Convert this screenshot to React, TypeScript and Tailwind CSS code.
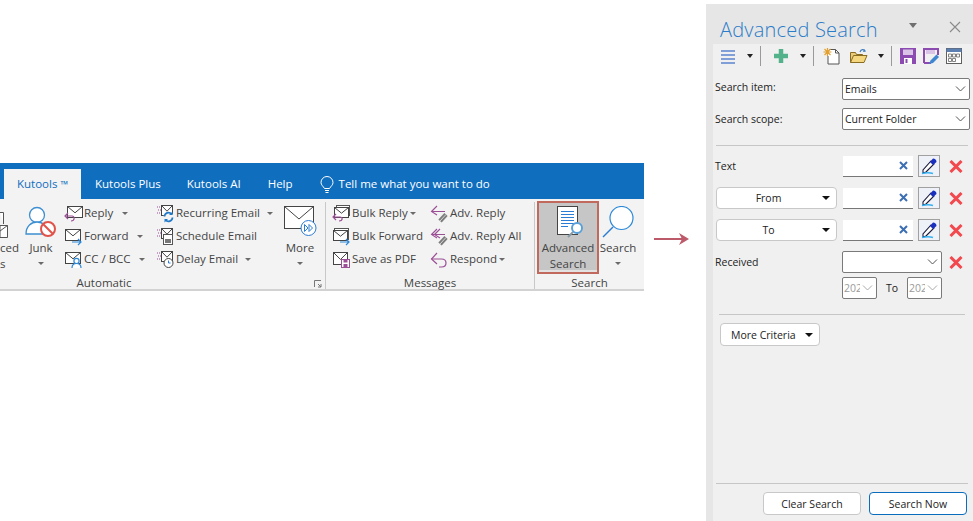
import React from "react";

const FONT = "font-['Open_Sans','Noto_Sans',sans-serif]";

function Env({ x = 1, y = 3, w = 15, h = 11, stroke = "#444" }: { x?: number; y?: number; w?: number; h?: number; stroke?: string }) {
  return (
    <>
      <rect x={x + 0.5} y={y + 0.5} width={w} height={h} fill="#fff" stroke={stroke} />
      <path d={`M${x + 0.5} ${y + 0.5}L${x + w / 2 + 0.5} ${y + h * 0.62}L${x + w + 0.5} ${y + 0.5}`} fill="none" stroke={stroke} />
    </>
  );
}

function Sm({ children }: { children: React.ReactNode }) {
  return <svg width="19" height="18" viewBox="0 0 19 18" className="shrink-0 overflow-visible">{children}</svg>;
}

const Purple = "#9b4f96";
const Blue = "#2b88d8";

function ReplyIcon() {
  return <Sm><Env x={3} y={1} /><path d="M1 11h7c3 0 3 5-1 5" fill="none" stroke={Purple} strokeWidth="1.2" /><path d="M4 8l-3 3 3 3" fill="none" stroke={Purple} strokeWidth="1.2" /></Sm>;
}
function ForwardIcon() {
  return <Sm><Env x={1} y={1} /><path d="M8 14h9M14 11l3 3-3 3" fill="none" stroke={Blue} strokeWidth="1.2" /></Sm>;
}
function CcIcon() {
  return <Sm><Env x={1} y={1} /><circle cx="12.5" cy="10" r="2.6" fill="#fff" stroke={Blue} strokeWidth="1.2" /><path d="M8 17c0-6 9-6 9 0" fill="#fff" stroke={Blue} strokeWidth="1.2" /></Sm>;
}
function Dots() {
  return <path d="M0 2h3M1 5h3M0 8h3" stroke={Purple} strokeWidth="1" strokeDasharray="1 1" fill="none" />;
}
function RecurIcon() {
  return <Sm><g transform="translate(1 0)"><Dots /><Env x={4} y={0} w={11} h={10} /><circle cx="11.500" cy="12" r="5" fill="#f3f3f3" stroke="none" /><path d="M7.500 11.500a4 4 0 0 1 7-2.500M15.500 12.500a4 4 0 0 1-7 2.500" fill="none" stroke="#1f78c8" strokeWidth="1.700" /><path d="M15.500 6.500v3.500h-3.500M7.500 17.500V14h3.500" fill="#1f78c8" /></g></Sm>;
}
function ScheduleIcon() {
  return <Sm><g transform="translate(1 0)"><Dots /><Env x={4} y={0} w={11} h={10} /><rect x="6.500" y="6.500" width="9" height="10" fill="#fff" stroke="#555" /><rect x="8" y="11" width="6" height="4" fill="#777" /></g></Sm>;
}
function DelayIcon() {
  return <Sm><g transform="translate(1 0)"><Dots /><Env x={4} y={0} w={11} h={10} /><circle cx="11.500" cy="12" r="4.500" fill="#fff" stroke="#444" /><path d="M11.500 9.500V12h2" fill="none" stroke="#2b7cd3" /></g></Sm>;
}
function BulkReplyIcon() {
  return <Sm><rect x="4.500" y="0.500" width="13" height="10" fill="#fff" stroke="#555" /><Env x={2} y={2} w={14} h={10} /><path d="M1 12h7c3 0 3 4-1 4" fill="none" stroke={Purple} strokeWidth="1.2" /><path d="M4 9l-3 3 3 3" fill="none" stroke={Purple} strokeWidth="1.2" /></Sm>;
}
function BulkForwardIcon() {
  return <Sm><rect x="2.500" y="0.500" width="14" height="11" fill="#fff" stroke="#555" /><Env x={1} y={2} w={14} h={10} /><path d="M8 14h9M14 11l3 3-3 3" fill="none" stroke={Blue} strokeWidth="1.2" /></Sm>;
}
function PdfIcon() {
  return <Sm><Env x={1} y={1} w={14} h={12} /><rect x="9.500" y="8.500" width="8" height="8" fill="#fff" stroke={Purple} /><rect x="11.500" y="8.500" width="4" height="3" fill={Purple} /><rect x="11.500" y="13" width="4" height="3" fill={Purple} /></Sm>;
}
function AdvReplyIcon({ all }: { all?: boolean }) {
  return (
    <Sm>
      <path d="M7 1L1.500 6.500L7 10M1.500 6.500H15" fill="none" stroke={Purple} strokeWidth="1.100" />
      {all && <path d="M10 1L4.500 6.500L10 10" fill="none" stroke={Purple} strokeWidth="1.100" />}
      <path d="M10 16L16 9.500" fill="none" stroke="#7d7d7d" strokeWidth="4.500" />
      <path d="M10 16L16 9.500" fill="none" stroke="#d5d5d5" strokeWidth="1" />
    </Sm>
  );
}
function RespondIcon() {
  return <Sm><path d="M7 2L1.500 8L7 13" fill="none" stroke={Purple} strokeWidth="1.2" /><path d="M1.500 8h10c6 0 6 8 0 8H9" fill="none" stroke={Purple} strokeWidth="1.2" /></Sm>;
}

function Caret({ className = "" }: { className?: string }) {
  return <span className={`inline-block w-0 h-0 border-x-[3px] border-x-transparent border-t-[3px] border-t-[#6a6a6a] ${className}`} />;
}

function SmallBtn({ icon, label, caretMl }: { icon: React.ReactNode; label: string; caretMl?: string }) {
  return (
    <div className="flex items-center h-[23px] gap-[1px]">
      {icon}
      <span className="whitespace-nowrap -mt-[2px]">{label}</span>
      {caretMl && <Caret className={caretMl} />}
    </div>
  );
}

function Large({ icon, label, w }: { icon: React.ReactNode; label: string; w: string }) {
  return (
    <div className={`flex flex-col items-center shrink-0 ${w}`}>
      <div className="h-[36px] flex items-end justify-center">{icon}</div>
      <div className="leading-[19px] text-center whitespace-nowrap">{label}</div>
      <Caret className="mt-[5px]" />
    </div>
  );
}

function Group({ label, w, children, launcher, labelClass = "" }: { label: string; w: string; children: React.ReactNode; launcher?: boolean; labelClass?: string }) {
  return (
    <div className={`relative flex flex-col shrink-0 border-r border-[#c8c8c8] mt-[3px] ${w}`}>
      <div className="flex h-[74px] shrink-0">{children}</div>
      <div className={`text-center leading-[14px] text-[#444] shrink-0 ${labelClass}`}>{label}</div>
      {launcher && (
        <svg width="8" height="8" viewBox="0 0 8 8" className="absolute right-[3px] bottom-[1px]">
          <path d="M0.500 7V0.500H7M4 4l3 3M7 4v3H4" fill="none" stroke="#777" />
        </svg>
      )}
    </div>
  );
}

function JunkIcon() {
  return (
    <svg width="32" height="32" viewBox="0 0 32 32">
      <circle cx="12" cy="9" r="7.500" fill="#fff" stroke="#3d8fd1" strokeWidth="1.300" />
      <path d="M1 28c0-16 22-16 22 0z" fill="#fff" stroke="#3d8fd1" strokeWidth="1.300" />
      <circle cx="23" cy="23" r="7" fill="#fff" stroke="#e0524a" strokeWidth="2" />
      <path d="M18 18l10 10" stroke="#e0524a" strokeWidth="2" />
    </svg>
  );
}
function MoreIcon() {
  return (
    <svg width="33" height="33" viewBox="0 0 33 33">
      <rect x="0.500" y="1.500" width="29" height="22" fill="#fff" stroke="#444" />
      <path d="M0.500 1.500L15 14L29.500 1.500" fill="none" stroke="#444" />
      <circle cx="24.500" cy="23" r="7.500" fill="#fff" stroke="#2b7cd3" />
      <path d="M20.500 19.500l3.500 3.500-3.500 3.500zM25 19.500l3.500 3.500-3.500 3.500z" fill="none" stroke="#2b7cd3" />
    </svg>
  );
}
function AdvSearchIcon() {
  return (
    <svg width="32" height="33" viewBox="0 0 32 33">
      <rect x="5.500" y="1.500" width="20" height="28" fill="#fff" stroke="#444" />
      <path d="M9 6.500h13M9 9.500h13M9 12.500h13M9 15.500h13M9 18.500h13M9 21.500h7" stroke="#2b7cd3" />
      <path d="M21 27l-5 5" stroke="#8a9aa5" strokeWidth="2" />
      <circle cx="25" cy="23" r="5" fill="#fff" stroke="#5aa0d8" strokeWidth="2" />
    </svg>
  );
}
function SearchIcon() {
  return (
    <svg width="32" height="32" viewBox="0 0 32 32">
      <circle cx="19.500" cy="12" r="11.500" fill="#fff" stroke="#2b88d8" strokeWidth="1.200" />
      <path d="M11 21L1 31" stroke="#2b7cd3" strokeWidth="1.400" />
    </svg>
  );
}

function Ribbon() {
  return (
    <div className="w-[644px] shrink-0 mt-[163px] h-[129px] text-[11.5px] text-[#444] overflow-hidden">
      <div className="h-[36px] bg-[#106ebe] flex items-end text-white">
        <div className="ml-[4px] w-[77px] h-[30px] bg-[#f3f3f3] text-[#106ebe] flex items-center justify-center whitespace-nowrap">Kutools <span className="ml-[3px] text-[10px]">™</span></div>
        <div className="ml-[14px] h-[30px] flex items-center whitespace-nowrap">Kutools Plus</div>
        <div className="ml-[26px] h-[30px] flex items-center whitespace-nowrap">Kutools AI</div>
        <div className="ml-[27px] h-[30px] flex items-center whitespace-nowrap">Help</div>
        <div className="ml-[27px] h-[30px] flex items-center whitespace-nowrap gap-[5px]">
          <svg width="14" height="17" viewBox="0 0 14 17"><path d="M4.500 12.500C3 10 1 9 1 6.500a6 6 0 0 1 12 0c0 2.500-2 3.500-3.500 6zM5 14.500h4M5.500 16.500h3" fill="none" stroke="#fff" /></svg>
          Tell me what you want to do
        </div>
      </div>
      <div className="h-[92px] bg-[#f3f3f3] border-b-2 border-[#d2d2d2] flex">
        <Group label="Automatic" w="w-[326px]" launcher labelClass="pr-[117px]">
          <div className="w-[20px] shrink-0 flex flex-col">
            <svg width="10" height="28" viewBox="0 0 10 28" className="mt-[9px] shrink-0">
              <path d="M0 1.500H3.500V13" fill="#fff" stroke="#555" />
              <path d="M0 14.500H7.500V26.500H0z" fill="#fff" stroke="#555" />
              <path d="M0 20L7.500 14.500" fill="none" stroke="#555" />
            </svg>
            <div className="leading-[16px] mt-[1px]">ced<br />s</div>
          </div>
          <Large icon={<JunkIcon />} label="Junk" w="w-[42px]" />
          <div className="w-[94px] shrink-0 pl-[2px]">
            <SmallBtn icon={<ReplyIcon />} label="Reply" caretMl="ml-[8px]" />
            <SmallBtn icon={<ForwardIcon />} label="Forward" caretMl="ml-[7px]" />
            <SmallBtn icon={<CcIcon />} label="CC / BCC" caretMl="ml-[7px]" />
          </div>
          <div className="w-[126px] shrink-0">
            <SmallBtn icon={<RecurIcon />} label="Recurring Email" caretMl="ml-[6px]" />
            <SmallBtn icon={<ScheduleIcon />} label="Schedule Email" />
            <SmallBtn icon={<DelayIcon />} label="Delay Email" caretMl="ml-[6px]" />
          </div>
          <Large icon={<MoreIcon />} label="More" w="w-[36px]" />
        </Group>
        <Group label="Messages" w="w-[209px]">
          <div className="w-[104px] shrink-0 pl-[6px]">
            <SmallBtn icon={<BulkReplyIcon />} label="Bulk Reply" caretMl="ml-[1px]" />
            <SmallBtn icon={<BulkForwardIcon />} label="Bulk Forward" />
            <SmallBtn icon={<PdfIcon />} label="Save as PDF" />
          </div>
          <div className="w-[100px] shrink-0">
            <SmallBtn icon={<AdvReplyIcon />} label="Adv. Reply" />
            <SmallBtn icon={<AdvReplyIcon all />} label="Adv. Reply All" />
            <SmallBtn icon={<RespondIcon />} label="Respond" caretMl="ml-[1px]" />
          </div>
        </Group>
        <div className="relative flex flex-col shrink-0 w-[109px] mt-[3px]">
          <div className="flex h-[74px] shrink-0">
            <div className="relative ml-[2px] -mt-[1px] w-[62px] h-[73px] bg-[#c6c6c6] border-2 border-[#c0695c] flex flex-col items-center shrink-0">
              <div className="h-[33px] mt-[2px]"><AdvSearchIcon /></div>
              <div className="leading-[16px] mt-[2px] text-center">Advanced<br />Search</div>
              <div className="absolute left-0 right-0 bottom-0 h-[2px] bg-[#e2e2e2]" />
            </div>
            <Large icon={<SearchIcon />} label="Search" w="w-[38px]" />
          </div>
          <div className="text-center leading-[14px] text-[#444] shrink-0">Search</div>
        </div>
      </div>
    </div>
  );
}

function Arrow() {
  return (
    <svg width="36" height="14" viewBox="0 0 36 14" className="shrink-0 mt-[232px] ml-[10px]">
      <path d="M0 7h29" stroke="#bc5a6a" strokeWidth="2" />
      <path d="M25 1l10 6-10 6 3-6z" fill="#bc5a6a" />
    </svg>
  );
}

function Chevron({ color = "#555" }: { color?: string }) {
  return <svg width="11" height="6" viewBox="0 0 11 6"><path d="M1 0.500l4.500 4.500L10 0.500" fill="none" stroke={color} /></svg>;
}

function SelectBox({ label, w }: { label: string; w: string }) {
  return (
    <div className={`${w} h-[22px] bg-white border border-[#7a7a7a] rounded-[2px] flex items-center justify-between pl-[2px] pr-[3px] text-[#1a1a1a]`}>
      <span className="pt-[2px]">{label}</span>
      <Chevron />
    </div>
  );
}

function BlackCaret() {
  return <span className="inline-block w-0 h-0 border-x-[4px] border-x-transparent border-t-[4px] border-t-[#111]" />;
}

function Field() {
  return (
    <>
      <div className="w-[70px] h-[21px] bg-white border-b border-[#777] flex items-center justify-end pr-[5px]">
        <svg width="9" height="9" viewBox="0 0 9 9"><path d="M1 1l7 7M8 1l-7 7" stroke="#3c6eb4" strokeWidth="2" /></svg>
      </div>
      <div className="ml-[5px] w-[22px] h-[22px] border border-[#a0a0a0] bg-[#eef2f8] flex items-center justify-center">
        <svg width="16" height="17" viewBox="0 0 16 17">
          <path d="M10 3l3 3-8 8-3 1 0-3z" fill="#fff" stroke="#1a1a3a" strokeWidth="1.100" />
          <path d="M9 4l3-3.500c2 0 3.500 1.500 3.500 3.500L12 7z" fill="#1a2fc0" />
          <path d="M1 15.500c4-1 8-1 11 0" fill="none" stroke="#35b0f0" strokeWidth="1.500" />
        </svg>
      </div>
    </>
  );
}

function RedX({ className = "ml-[9px]" }: { className?: string }) {
  return (
    <svg width="14" height="13" viewBox="0 0 14 13" className={`shrink-0 ${className}`}>
      <path d="M1.500 1l11 11M12.500 1l-11 11" stroke="#f2484e" strokeWidth="3" />
    </svg>
  );
}

function Pill({ label }: { label: string }) {
  return (
    <div className="ml-[1px] w-[121px] h-[22px] bg-white border border-[#c8c8c8] rounded-[4px] flex items-center">
      <span className="flex-1 text-center pr-[2px] pt-[2px]">{label}</span>
      <span className="mr-[6px] flex"><BlackCaret /></span>
    </div>
  );
}

function Row({ children }: { children: React.ReactNode }) {
  return <div className="flex items-center h-[22px] mb-[10px]">{children}</div>;
}

function DateBox() {
  return (
    <div className="w-[35px] h-[22px] bg-white border border-[#7a7a7a] rounded-[2px] flex items-center justify-between pl-[1px] pr-[3px] text-[#9a9a9a] overflow-hidden">
      <span className="w-[16px] overflow-hidden pt-[2px]">202</span>
      <Chevron color="#aaa" />
    </div>
  );
}

function ToolSep() {
  return <span className="w-px h-[20px] bg-[#9a9a9a] shrink-0" />;
}

function ToolCaret({ className }: { className: string }) {
  return <span className={`flex ${className}`}><span className="w-0 h-0 border-x-[3.500px] border-x-transparent border-t-[4px] border-t-[#222]" /></span>;
}

function Panel() {
  return (
    <div className="absolute left-[706px] top-[4px] w-[267px] h-[517px] bg-[#e6e6e6] pl-[7px] flex flex-col text-[10.5px] text-[#222]">
      <div className="h-[40px] flex items-end relative -ml-[7px] pl-[14px]">
        <span className="text-[20px] leading-[26px] font-light text-[#2b7cc9] tracking-[0.2px] mb-[1px] whitespace-nowrap">Advanced Search</span>
        <span className="absolute left-[203px] top-[19px] w-0 h-0 border-x-[4.500px] border-x-transparent border-t-[5px] border-t-[#6f6f6f]" />
        <svg width="12" height="12" viewBox="0 0 12 12" className="absolute left-[243px] top-[17px]"><path d="M1 1l10 10M11 1L1 11" stroke="#8a8a8a" strokeWidth="1.100" /></svg>
      </div>
      <div className="flex-1 bg-[#f0f0f0] flex flex-col pl-[2px] pr-[3px]">
        <div className="h-[24px] flex items-center -ml-[2px] pl-[8px]">
          <svg width="14" height="15" viewBox="0 0 14 15" className="shrink-0"><path d="M0 2h14M0 6h14M0 10h14M0 14h14" stroke="#5b84d0" strokeWidth="1.700" /></svg>
          <ToolCaret className="ml-[12px]" />
          <span className="ml-[7px] flex"><ToolSep /></span>
          <svg width="14" height="14" viewBox="0 0 14 14" className="ml-[13px] shrink-0"><path d="M7 0v14M0 7h14" stroke="#54b28a" strokeWidth="4.500" /></svg>
          <ToolCaret className="ml-[12px]" />
          <span className="ml-[7px] flex"><ToolSep /></span>
          <svg width="17" height="17" viewBox="0 0 17 17" className="ml-[9px] shrink-0">
            <path d="M6.500 1.500h6l3.500 3.500v11h-11v-8" fill="#fff" stroke="#555" />
            <path d="M12.500 1.500v3.500h3.500" fill="none" stroke="#555" />
            <path d="M4.500 0v8M0.500 4h8M1.500 1l6 6M7.500 1l-6 6" stroke="#e2a030" strokeWidth="1.200" />
          </svg>
          <svg width="18" height="16" viewBox="0 0 18 16" className="ml-[10px] shrink-0">
            <path d="M0.500 14.500V4.500h5l1 2h6v2" fill="#e8cc7a" stroke="#8a6d20" />
            <path d="M0.500 14.500l3-7h13.500l-3 7z" fill="#f4d77e" stroke="#8a6d20" />
            <path d="M10 4c1-3 4-3 5-1" fill="none" stroke="#3f7ec0" strokeWidth="1.200" />
            <path d="M14 1l2 2.500-3 .5z" fill="#3f7ec0" />
          </svg>
          <ToolCaret className="ml-[10px]" />
          <span className="ml-[7px] flex"><ToolSep /></span>
          <svg width="16" height="16" viewBox="0 0 16 16" className="ml-[8px] shrink-0">
            <rect width="16" height="16" fill="#8c4bb0" />
            <rect x="3" y="1.500" width="10" height="5.500" fill="#d9c3e6" />
            <rect x="4" y="10" width="8" height="6" fill="#fff" />
            <rect x="5.500" y="11" width="2" height="4" fill="#8c4bb0" />
          </svg>
          <svg width="16" height="16" viewBox="0 0 16 16" className="ml-[7px] shrink-0">
            <path d="M1 15V1h14v6M1 15h7" fill="#f0f0f0" stroke="#8c4bb0" strokeWidth="2" />
            <rect x="3" y="2" width="9" height="4" fill="#d9c3e6" />
            <path d="M6 16l1.500-3.500 6-6 2.500 2.500-6 6z" fill="#3f86cf" />
          </svg>
          <svg width="16" height="16" viewBox="0 0 16 16" className="ml-[7px] shrink-0">
            <rect x="0.500" y="0.500" width="15" height="15" fill="#fff" stroke="#606060" />
            <rect x="0.500" y="0.500" width="15" height="3.500" fill="#5a7fb0" />
            <path d="M2.500 6h3v3h-3zM6.500 6h3v3h-3zM10.500 6h3v3h-3zM2.500 10.500h3v3h-3zM6.500 10.500h3v3h-3z" fill="none" stroke="#666" strokeWidth="0.800" />
          </svg>
        </div>
        <div className="h-[10px]" />
        <div className="flex items-center h-[22px]">
          <span className="w-[127px] -mt-[2px]">Search item:</span>
          <SelectBox label="Emails" w="w-[128px]" />
        </div>
        <div className="flex items-center h-[22px] mt-[8px]">
          <span className="w-[127px] pt-[2px]">Search scope:</span>
          <SelectBox label="Current Folder" w="w-[128px]" />
        </div>
        <div className="h-px bg-[#c6c6c6] mt-[15px] ml-[1px] mr-[2px]" />
        <div className="h-[9px]" />
        <Row><span className="w-[128px] pt-[2px]">Text</span><Field /><RedX /></Row>
        <Row><Pill label="From" /><span className="w-[6px]" /><Field /><RedX /></Row>
        <Row><Pill label="To" /><span className="w-[6px]" /><Field /><RedX /></Row>
        <div className="flex items-center h-[22px]">
          <span className="w-[127px] pt-[2px]">Received</span>
          <SelectBox label="" w="w-[100px]" />
          <RedX className="ml-[7px]" />
        </div>
        <div className="flex items-center h-[22px] mt-[4px] pl-[127px]">
          <DateBox />
          <span className="w-[30px] text-center pt-[2px]">To</span>
          <DateBox />
        </div>
        <div className="h-px bg-[#c6c6c6] mt-[15px] ml-[4px] mr-[5px]" />
        <div className="mt-[8px] ml-[5px] w-[100px] h-[23px] bg-white border border-[#c8c8c8] rounded-[4px] flex items-center pl-[10px]">
          <span className="flex-1 pt-[2px]">More Criteria</span>
          <span className="mr-[6px] flex"><BlackCaret /></span>
        </div>
        <div className="flex-1" />
        <div className="h-px bg-[#c6c6c6] ml-[1px] mr-[2px]" />
        <div className="h-[37px] flex items-start justify-end pt-[8px] pr-[3px] gap-[8px]">
          <div className="w-[98px] h-[23px] bg-white border border-[#c8c8c8] rounded-[4px] flex items-center justify-center pt-[2px]">Clear Search</div>
          <div className="w-[98px] h-[23px] bg-white border border-[#0a6cbd] rounded-[4px] flex items-center justify-center pt-[2px]">Search Now</div>
        </div>
      </div>
    </div>
  );
}

export default function App() {
  return (
    <div className={`relative w-[973px] h-[521px] bg-white overflow-hidden flex items-start ${FONT}`}>
      <Ribbon />
      <Arrow />
      <Panel />
    </div>
  );
}
